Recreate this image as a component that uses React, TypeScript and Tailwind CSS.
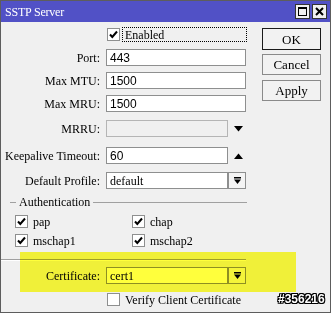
import React from "react";

function Check({ checked = true }: { checked?: boolean }) {
  return (
    <div className="w-[13px] h-[13px] border border-[#8e8f8f] bg-white flex items-center justify-center shrink-0">
      {checked && (
        <svg width="9" height="9" viewBox="0 0 9 9">
          <path d="M1 4.5 L3.3 7 L8 1.5" fill="none" stroke="#000" strokeWidth="2" />
        </svg>
      )}
    </div>
  );
}

function DropBtn() {
  return (
    <div className="w-[18px] h-[17px] border border-[#8e8f8f] bg-[#f4f4f4] flex items-center justify-center shrink-0">
      <svg width="9" height="9" viewBox="0 0 9 9">
        <rect x="1" y="1" width="7" height="1.5" fill="#000" />
        <path d="M1 3.5 H8 L4.5 8 Z" fill="#000" />
      </svg>
    </div>
  );
}

function Row({ label, children, mt }: { label: string; children: React.ReactNode; mt: string }) {
  return (
    <div className={`flex items-center h-[17px] ${mt}`}>
      <div className="w-[100px] text-right text-[12px] leading-none pr-[1px] whitespace-nowrap">{label}</div>
      <div className="ml-[5px] flex items-center">{children}</div>
    </div>
  );
}

function Input({ value, w = "w-[140px]", sans = false, disabled = false }: { value: string; w?: string; sans?: boolean; disabled?: boolean }) {
  return (
    <div
      className={`${w} h-[17px] border border-[#8e8f8f] ${disabled ? "bg-[#f0f0f0] border-[#b5b5b5]" : "bg-white"} flex items-center pl-[3px] text-[12px] leading-none ${sans ? "font-['Liberation_Sans']" : ""}`}
    >
      {value}
    </div>
  );
}

export default function App() {
  return (
    <div className="w-[331px] h-[316px] bg-white relative font-['Liberation_Serif',serif] text-black overflow-hidden">
      <div className="w-[331px] h-[313px] border border-[#5d5d5d] bg-[#f0f0f0] flex flex-col">
        {/* Title bar */}
        <div className="h-[21px] bg-[#5151c6] flex items-center pl-[4px] pr-[3px]">
          <div className="text-white text-[12px] tracking-[-0.2px] leading-none flex-1">SSTP Server</div>
          <div className="flex gap-[2px]">
            <div className="w-[15px] h-[15px] bg-[#f0f0f0] border border-[#333] flex items-center justify-center">
              <div className="w-[9px] h-[9px] border border-black border-t-2"></div>
            </div>
            <div className="w-[15px] h-[15px] bg-[#f0f0f0] border border-[#333] flex items-center justify-center">
              <svg width="9" height="9" viewBox="0 0 9 9">
                <path d="M1 1 L8 8 M8 1 L1 8" stroke="#000" strokeWidth="2" />
              </svg>
            </div>
          </div>
        </div>
        {/* Body */}
        <div className="flex flex-1">
          <div className="w-[256px] pt-[5px] flex flex-col">
            {/* Enabled */}
            <div className="flex items-center h-[15px]">
              <div className="w-[100px]"></div>
              <div className="ml-[6px] flex items-center">
                <Check />
                <div className="ml-[2px] w-[125px] h-[15px] border border-dotted border-black flex items-center pl-[2px] text-[12px] leading-none">
                  Enabled
                </div>
              </div>
            </div>
            <Row label="Port:" mt="mt-[7px]">
              <Input value="443" sans />
            </Row>
            <Row label="Max MTU:" mt="mt-[6px]">
              <Input value="1500" sans />
            </Row>
            <Row label="Max MRU:" mt="mt-[6px]">
              <Input value="1500" sans />
            </Row>
            <Row label="MRRU:" mt="mt-[8px]">
              <Input value="" w="w-[122px]" disabled />
              <svg className="ml-[6px]" width="9" height="6" viewBox="0 0 9 6">
                <path d="M0 0 H9 L4.5 5.5 Z" fill="#000" />
              </svg>
            </Row>
            <Row label="Keepalive Timeout:" mt="mt-[10px]">
              <Input value="60" sans w="w-[122px]" />
              <svg className="ml-[6px]" width="9" height="6" viewBox="0 0 9 6">
                <path d="M0 6 H9 L4.5 0.5 Z" fill="#000" />
              </svg>
            </Row>
            <Row label="Default Profile:" mt="mt-[8px]">
              <Input value="default" w="w-[122px]" />
              <DropBtn />
            </Row>
            {/* Authentication group */}
            <div className="mt-[6px] h-[14px] flex items-center">
              <div className="ml-[9px] w-[6px] border-t border-[#a0a0a0]"></div>
              <div className="mx-[3px] text-[12px] leading-none">Authentication</div>
              <div className="flex-1 mr-[10px] border-t border-[#a0a0a0]"></div>
            </div>
            <div className="mt-[6px] flex h-[13px] items-center text-[12px] leading-none">
              <div className="ml-[14px] w-[117px] flex items-center">
                <Check />
                <span className="ml-[5px]">pap</span>
              </div>
              <div className="flex items-center">
                <Check />
                <span className="ml-[5px]">chap</span>
              </div>
            </div>
            <div className="mt-[6px] flex h-[13px] items-center text-[12px] leading-none">
              <div className="ml-[14px] w-[117px] flex items-center">
                <Check />
                <span className="ml-[5px]">mschap1</span>
              </div>
              <div className="flex items-center">
                <Check />
                <span className="ml-[5px]">mschap2</span>
              </div>
            </div>
            <div className="mt-[12px] w-[245px] border-t border-[#a0a0a0] border-b border-b-white"></div>
            <Row label="Certificate:" mt="mt-[6px]">
              <Input value="cert1" w="w-[122px]" />
              <DropBtn />
            </Row>
            <div className="mt-[9px] flex items-center h-[13px]">
              <div className="w-[100px]"></div>
              <div className="ml-[6px] flex items-center text-[12px] leading-none">
                <Check checked={false} />
                <span className="ml-[5px]">Verify Client Certificate</span>
              </div>
            </div>
          </div>
          {/* Buttons */}
          <div className="ml-[5px] pt-[6px] flex flex-col">
            <div className="w-[59px] h-[22px] border border-[#1a1a1a] bg-[#f2f2f2] flex items-center justify-center text-[13px] leading-none">
              OK
            </div>
            <div className="mt-[4px] w-[59px] h-[21px] border border-[#8a8a8a] bg-[#f2f2f2] flex items-center justify-center text-[13px] leading-none">
              Cancel
            </div>
            <div className="mt-[5px] w-[59px] h-[21px] border border-[#8a8a8a] bg-[#f2f2f2] flex items-center justify-center text-[13px] leading-none">
              Apply
            </div>
          </div>
        </div>
      </div>
      {/* Yellow highlight annotation */}
      <div className="absolute left-[20px] top-[252px] w-[276px] h-[40px] bg-[#ffff3c] mix-blend-multiply pointer-events-none"></div>
      {/* Watermark */}
      <div className="absolute left-[278px] top-[293px] text-[12px] font-bold leading-none text-white font-['Liberation_Sans',sans-serif] [text-shadow:1px_0_0_#000,-1px_0_0_#000,0_1px_0_#000,0_-1px_0_#000,1px_1px_0_#000,-1px_-1px_0_#000,1px_-1px_0_#000,-1px_1px_0_#000]">
        #356216
      </div>
    </div>
  );
}
